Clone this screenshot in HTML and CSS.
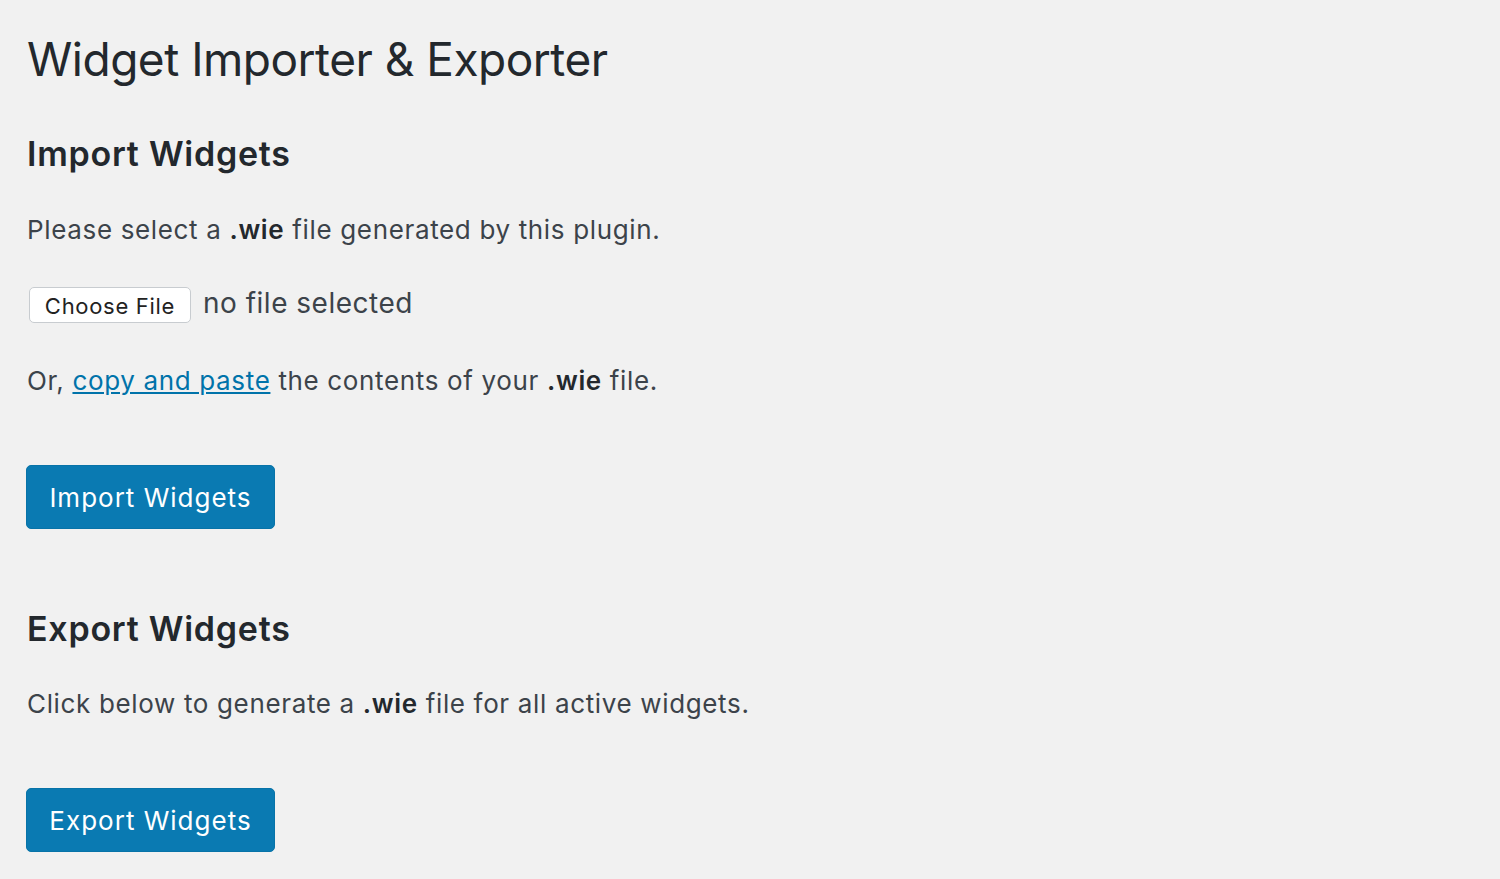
FILE: index.html
```html
<!DOCTYPE html>
<html lang="en">
<head>
<meta charset="utf-8">
<title>Widget Importer &amp; Exporter</title>
<link rel="stylesheet" href="styles.css">
</head>
<body>
<div class="wrap">
  <h1 class="title">Widget Importer &amp; Exporter</h1>

  <h2 class="section-title">Import Widgets</h2>
  <p class="text">Please select a <b>.wie</b> file generated by this plugin.</p>
  <div class="file-row">
    <span class="file-btn">Choose File</span>
    <span class="file-status">no file selected</span>
  </div>
  <p class="text text-or">Or, <a class="link" href="#">copy and paste</a> the contents of your <b>.wie</b> file.</p>
  <div class="btn-row btn-row-import"><span class="btn-primary">Import Widgets</span></div>

  <h2 class="section-title section-export">Export Widgets</h2>
  <p class="text text-export">Click below to generate a <b>.wie</b> file for all active widgets.</p>
  <div class="btn-row btn-row-export"><span class="btn-primary">Export Widgets</span></div>
</div>
</body>
</html>
```

FILE: styles.css
```css
html, body {
  margin: 0;
  padding: 0;
  background: #f1f1f1;
}
body {
  font-family: Inter, "Liberation Sans", sans-serif;
  color: #444;
}
.wrap {
  padding: 32px 0 0 27px;
}
.title {
  margin: 0;
  font-size: 46px;
  line-height: 55px;
  font-weight: 400;
  color: #23282d;
  letter-spacing: -0.5px;
}
.section-title {
  margin: 47px 0 0;
  font-size: 34px;
  line-height: 40px;
  font-weight: 600;
  color: #23282d;
  letter-spacing: 0.75px;
}
.text {
  margin: 38px 0 0;
  font-size: 26px;
  line-height: 36px;
  color: #3c434a;
  letter-spacing: 0.65px;
}
.text b {
  color: #23282d;
  font-weight: 600;
}
.file-row {
  margin-top: 39px;
  display: flex;
  align-items: center;
  gap: 12px;
  padding-left: 2px;
}
.file-btn {
  display: inline-flex;
  align-items: center;
  justify-content: center;
  box-sizing: border-box;
  width: 162px;
  height: 36px;
  background: #fff;
  border: 1px solid #c8ccd0;
  border-radius: 5px;
  font-size: 22px;
  color: #222;
  letter-spacing: 0.7px;
  padding-top: 2px;
}
.file-status {
  font-size: 28px;
  color: #3c434a;
  letter-spacing: 0.5px;
  position: relative;
  top: -2px;
}
.text-or {
  margin-top: 40px;
}
.link {
  color: #0073aa;
  text-decoration: underline;
}
.btn-row-import {
  margin-top: 66px;
}
.btn-primary {
  display: inline-flex;
  align-items: center;
  justify-content: center;
  box-sizing: border-box;
  width: 249px;
  height: 64px;
  background: #0a7ab2;
  border: 1px solid #0873a8;
  border-radius: 5px;
  color: #fff;
  font-size: 26px;
  letter-spacing: 1px;
}
.btn-row {
  margin-left: -1px;
}
.section-export {
  margin-top: 80px;
}
.text-export {
  margin-top: 37px;
}
.btn-row-export {
  margin-top: 66px;
}
```
